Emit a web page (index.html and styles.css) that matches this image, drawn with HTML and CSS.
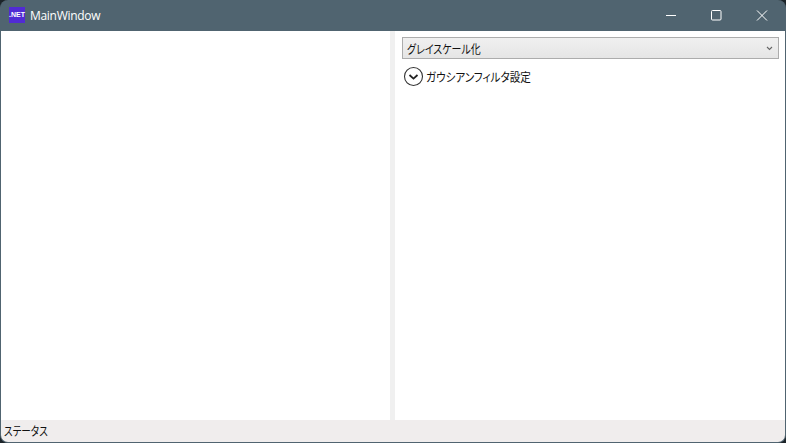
FILE: index.html
```html
<!DOCTYPE html>
<html lang="ja">
<head>
<meta charset="utf-8">
<title>MainWindow</title>
<link rel="stylesheet" href="styles.css">
</head>
<body>
<div class="window">
  <header class="titlebar">
    <div class="app-icon">.NET</div>
    <div class="title">MainWindow</div>
    <div class="caption">
      <div class="cap-btn"><svg width="12" height="12" viewBox="0 0 12 12"><path d="M0 5.5H10" stroke="#fff" fill="none"/></svg></div>
      <div class="cap-btn"><svg width="12" height="12" viewBox="0 0 12 12"><rect x="0.5" y="0.5" width="9.5" height="9.5" rx="1" stroke="#fff" fill="none"/></svg></div>
      <div class="cap-btn"><svg width="12" height="12" viewBox="0 0 12 12"><path d="M1 0.5L11 10.5M11 0.5L1 10.5" stroke="#fff" fill="none"/></svg></div>
    </div>
  </header>
  <main class="content">
    <section class="left"></section>
    <div class="splitter"></div>
    <section class="right">
      <div class="combo">
        <span class="narrow combo-text">グレイスケール化</span>
        <svg class="combo-arrow" width="7" height="5" viewBox="0 0 7 5"><path d="M1 1L3.5 3.5L6 1" stroke="#666" stroke-width="1.1" fill="none"/></svg>
      </div>
      <div class="expander">
        <svg width="21" height="21" viewBox="0 0 21 21"><circle cx="10.5" cy="10.5" r="9" stroke="#333" stroke-width="1.1" fill="#fff"/><path d="M6.5 9L10.5 12.6L14.5 9" stroke="#222" stroke-width="1.8" fill="none"/></svg>
        <span class="narrow expander-text">ガウシアンフィルタ設定</span>
      </div>
    </section>
  </main>
  <footer class="status"><span class="narrow status-text">ステータス</span></footer>
</div>
</body>
</html>
```
FILE: styles.css
```css
html, body {
  margin: 0;
  height: 100%;
  background: #1c2429;
  overflow: hidden;
}
.window {
  box-sizing: border-box;
  width: 786px;
  height: 443px;
  display: flex;
  flex-direction: column;
  background: #506470;
  border: 1px solid #506470;
  border-top: 0;
  border-radius: 8px;
  overflow: hidden;
  font-family: "Noto Sans CJK JP", "Liberation Sans", sans-serif;
  font-size: 12px;
  font-feature-settings: "palt";
  color: #111;
}
.narrow {
  display: inline-block;
  transform-origin: left center;
}
.combo-text { transform: scaleX(0.83); }
.expander-text { transform: scaleX(0.88); }
.status-text { transform: scaleX(0.8); }
.titlebar {
  height: 31px;
  flex: none;
  display: flex;
  align-items: center;
  padding-left: 8px;
  color: #fff;
}
.app-icon {
  width: 16px;
  height: 16px;
  margin-bottom: 1px;
  background: #512bd4;
  color: #fff;
  font: bold 7px/16px "Liberation Sans", sans-serif;
  text-align: center;
}
.title {
  margin-left: 5px;
  font: 12px "Open Sans", "Liberation Sans", sans-serif;
  letter-spacing: -0.3px;
}
.caption {
  margin-left: auto;
  display: flex;
  margin-right: 1px;
}
.cap-btn {
  width: 45px;
  height: 31px;
  display: flex;
  align-items: center;
  justify-content: center;
}
.content {
  flex: 1;
  display: flex;
  min-height: 0;
  background: #fff;
}
.left {
  width: 389px;
  flex: none;
  background: #fff;
}
.splitter {
  width: 5px;
  flex: none;
  background: #f0f0f0;
}
.right {
  flex: 1;
  background: #fff;
  padding: 6px 6px 0 7px;
}
.combo {
  box-sizing: border-box;
  height: 22px;
  display: flex;
  align-items: center;
  justify-content: space-between;
  padding: 0 5px 0 4px;
  border: 1px solid #acacac;
  background: linear-gradient(#f0f0f0, #e5e5e5);
}
.expander {
  display: flex;
  align-items: center;
  gap: 2px;
  margin-top: 7px;
  padding-left: 1px;
}
.status {
  flex: none;
  height: 22px;
  line-height: 22px;
  background: #f0eded;
  padding-left: 3px;
}
```
